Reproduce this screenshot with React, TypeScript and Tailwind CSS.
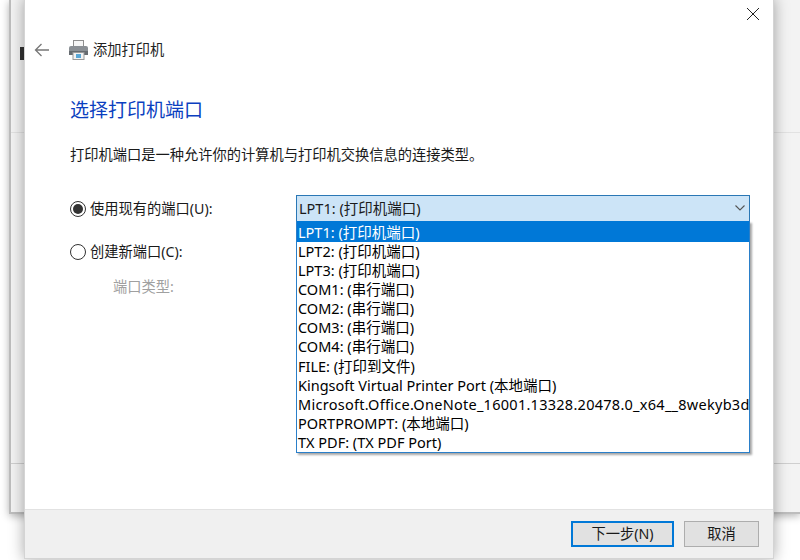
import React from 'react';

const ports = [
  'LPT1: (打印机端口)',
  'LPT2: (打印机端口)',
  'LPT3: (打印机端口)',
  'COM1: (串行端口)',
  'COM2: (串行端口)',
  'COM3: (串行端口)',
  'COM4: (串行端口)',
  'FILE: (打印到文件)',
  'Kingsoft Virtual Printer Port (本地端口)',
  'Microsoft.Office.OneNote_16001.13328.20478.0_x64__8wekyb3d',
  'PORTPROMPT: (本地端口)',
  'TX PDF: (TX PDF Port)',
];

const PrinterIcon = () => (
  <svg width="21" height="20" viewBox="0 0 21 20">
    <rect x="5.5" y="0.5" width="10" height="7" fill="#f6f6f6" stroke="#8f8f8f" />
    <rect x="1" y="6" width="19" height="9" rx="2" fill="#8a8f94" />
    <rect x="1" y="11" width="19" height="4" fill="#666b70" />
    <rect x="5" y="12.5" width="11" height="7" fill="#f2f2f2" stroke="#9a9a9a" />
    <rect x="8" y="14" width="5" height="4" fill="#5aa7d6" />
  </svg>
);

export default function App() {
  return (
    <div className="relative w-[800px] h-[560px] overflow-hidden bg-white font-['Noto_Sans','Noto_Sans_CJK_SC',sans-serif] text-[14.25px] text-[#1a1a1a]">
      {/* window behind the dialog */}
      <div className="absolute left-[9px] top-0 w-[791px] h-[514px] bg-[#f3f3f3] border-l-2 border-b-2 border-[#bdbdbd] shadow-[0_2px_8px_rgba(0,0,0,0.3)]">
        <div className="absolute left-0 right-0 top-[132px] h-px bg-[#e2e2e2]" />
        <div className="absolute left-0 right-0 top-[463px] h-px bg-[#cfcfcf]" />
        <div className="absolute left-[9px] top-[47px] w-[4px] h-[13px] bg-[#333]" />
      </div>

      {/* dialog */}
      <div className="absolute left-[24px] top-[-2px] w-[750px] h-[561px] flex flex-col bg-white border border-[#d4d4d4] shadow-[0_0_14px_rgba(0,0,0,0.35)]">
        <div className="relative flex-1">
          <svg className="absolute left-[721px] top-[8px]" width="14" height="14" viewBox="0 0 14 14">
            <path d="M1 1L13 13M13 1L1 13" stroke="#222" strokeWidth="1" fill="none" />
          </svg>

          <div className="flex items-center h-[24px] mt-[39px] pl-[9px]">
            <svg width="16" height="14" viewBox="0 0 16 14">
              <path d="M15 7H1.5M7.5 1L1.5 7l6 6" stroke="#777" strokeWidth="1.3" fill="none" />
            </svg>
            <div className="ml-[18px]"><PrinterIcon /></div>
            <span className="ml-[4px] text-[#222]">添加打印机</span>
          </div>

          <h1 className="ml-[45px] mt-[35px] text-[19px] leading-[26px] text-[#0b3fc0]">选择打印机端口</h1>

          <p className="ml-[45px] mt-[22px] leading-[20px]">打印机端口是一种允许你的计算机与打印机交换信息的连接类型。</p>

          <div className="flex items-center ml-[45px] mt-[30px] h-[26px]">
            <span className="mt-[2px] w-[16px] h-[16px] rounded-full border border-[#333] flex items-center justify-center">
              <span className="w-[10px] h-[10px] rounded-full bg-[#333]" />
            </span>
            <span className="mt-[2px] ml-[4px] w-[206px]">使用现有的端口(U):</span>
            <div className="relative w-[454px] text-[14.5px]">
              <div className="flex items-center justify-between h-[27px] pl-[2px] pr-[4px] bg-[#cce4f7] border border-[#2a77b5]">
                <span className="mt-[1px]">LPT1: (打印机端口)</span>
                <svg width="10" height="6" viewBox="0 0 10 6">
                  <path d="M0.5 0.5L5 5L9.5 0.5" stroke="#555" strokeWidth="1.1" fill="none" />
                </svg>
              </div>
              {/* open list */}
              <div className="absolute left-0 top-[26px] w-[454px] h-[232px] overflow-hidden bg-white border border-[#2a7fc9] border-t-0 shadow-[2px_2px_2px_rgba(0,0,0,0.35)]">
                {ports.map((p, i) => (
                  <div
                    key={p}
                    className={i === 0
                      ? 'h-[21px] pt-[2px] leading-[19px] pl-[1px] whitespace-nowrap bg-[#0078d7] text-white'
                      : i === 9
                        ? 'h-[19.2px] leading-[19px] pl-[1px] whitespace-nowrap text-black tracking-[0.27px]'
                        : 'h-[19.2px] leading-[19px] pl-[1px] whitespace-nowrap text-black'}
                  >
                    {p}
                  </div>
                ))}
              </div>
            </div>
          </div>

          <div className="flex items-center ml-[45px] mt-[21px] h-[20px]">
            <span className="w-[16px] h-[16px] rounded-full border border-[#333]" />
            <span className="ml-[4px]">创建新端口(C):</span>
          </div>
          <div className="ml-[88px] mt-[17px] leading-[16px] text-[#a0a0a0]">端口类型:</div>
        </div>

        {/* footer */}
        <div className="flex items-center justify-end gap-[10px] h-[49px] pr-[14px] bg-[#f0f0f0] border-t border-[#e2e2e2]">
          <button className="w-[103px] h-[26px] bg-[#e1e1e1] border-2 border-[#0078d7] text-[#1a1a1a]">下一步(N)</button>
          <button className="w-[75px] h-[26px] bg-[#e1e1e1] border border-[#adadad] text-[#1a1a1a]">取消</button>
        </div>
      </div>
    </div>
  );
}
